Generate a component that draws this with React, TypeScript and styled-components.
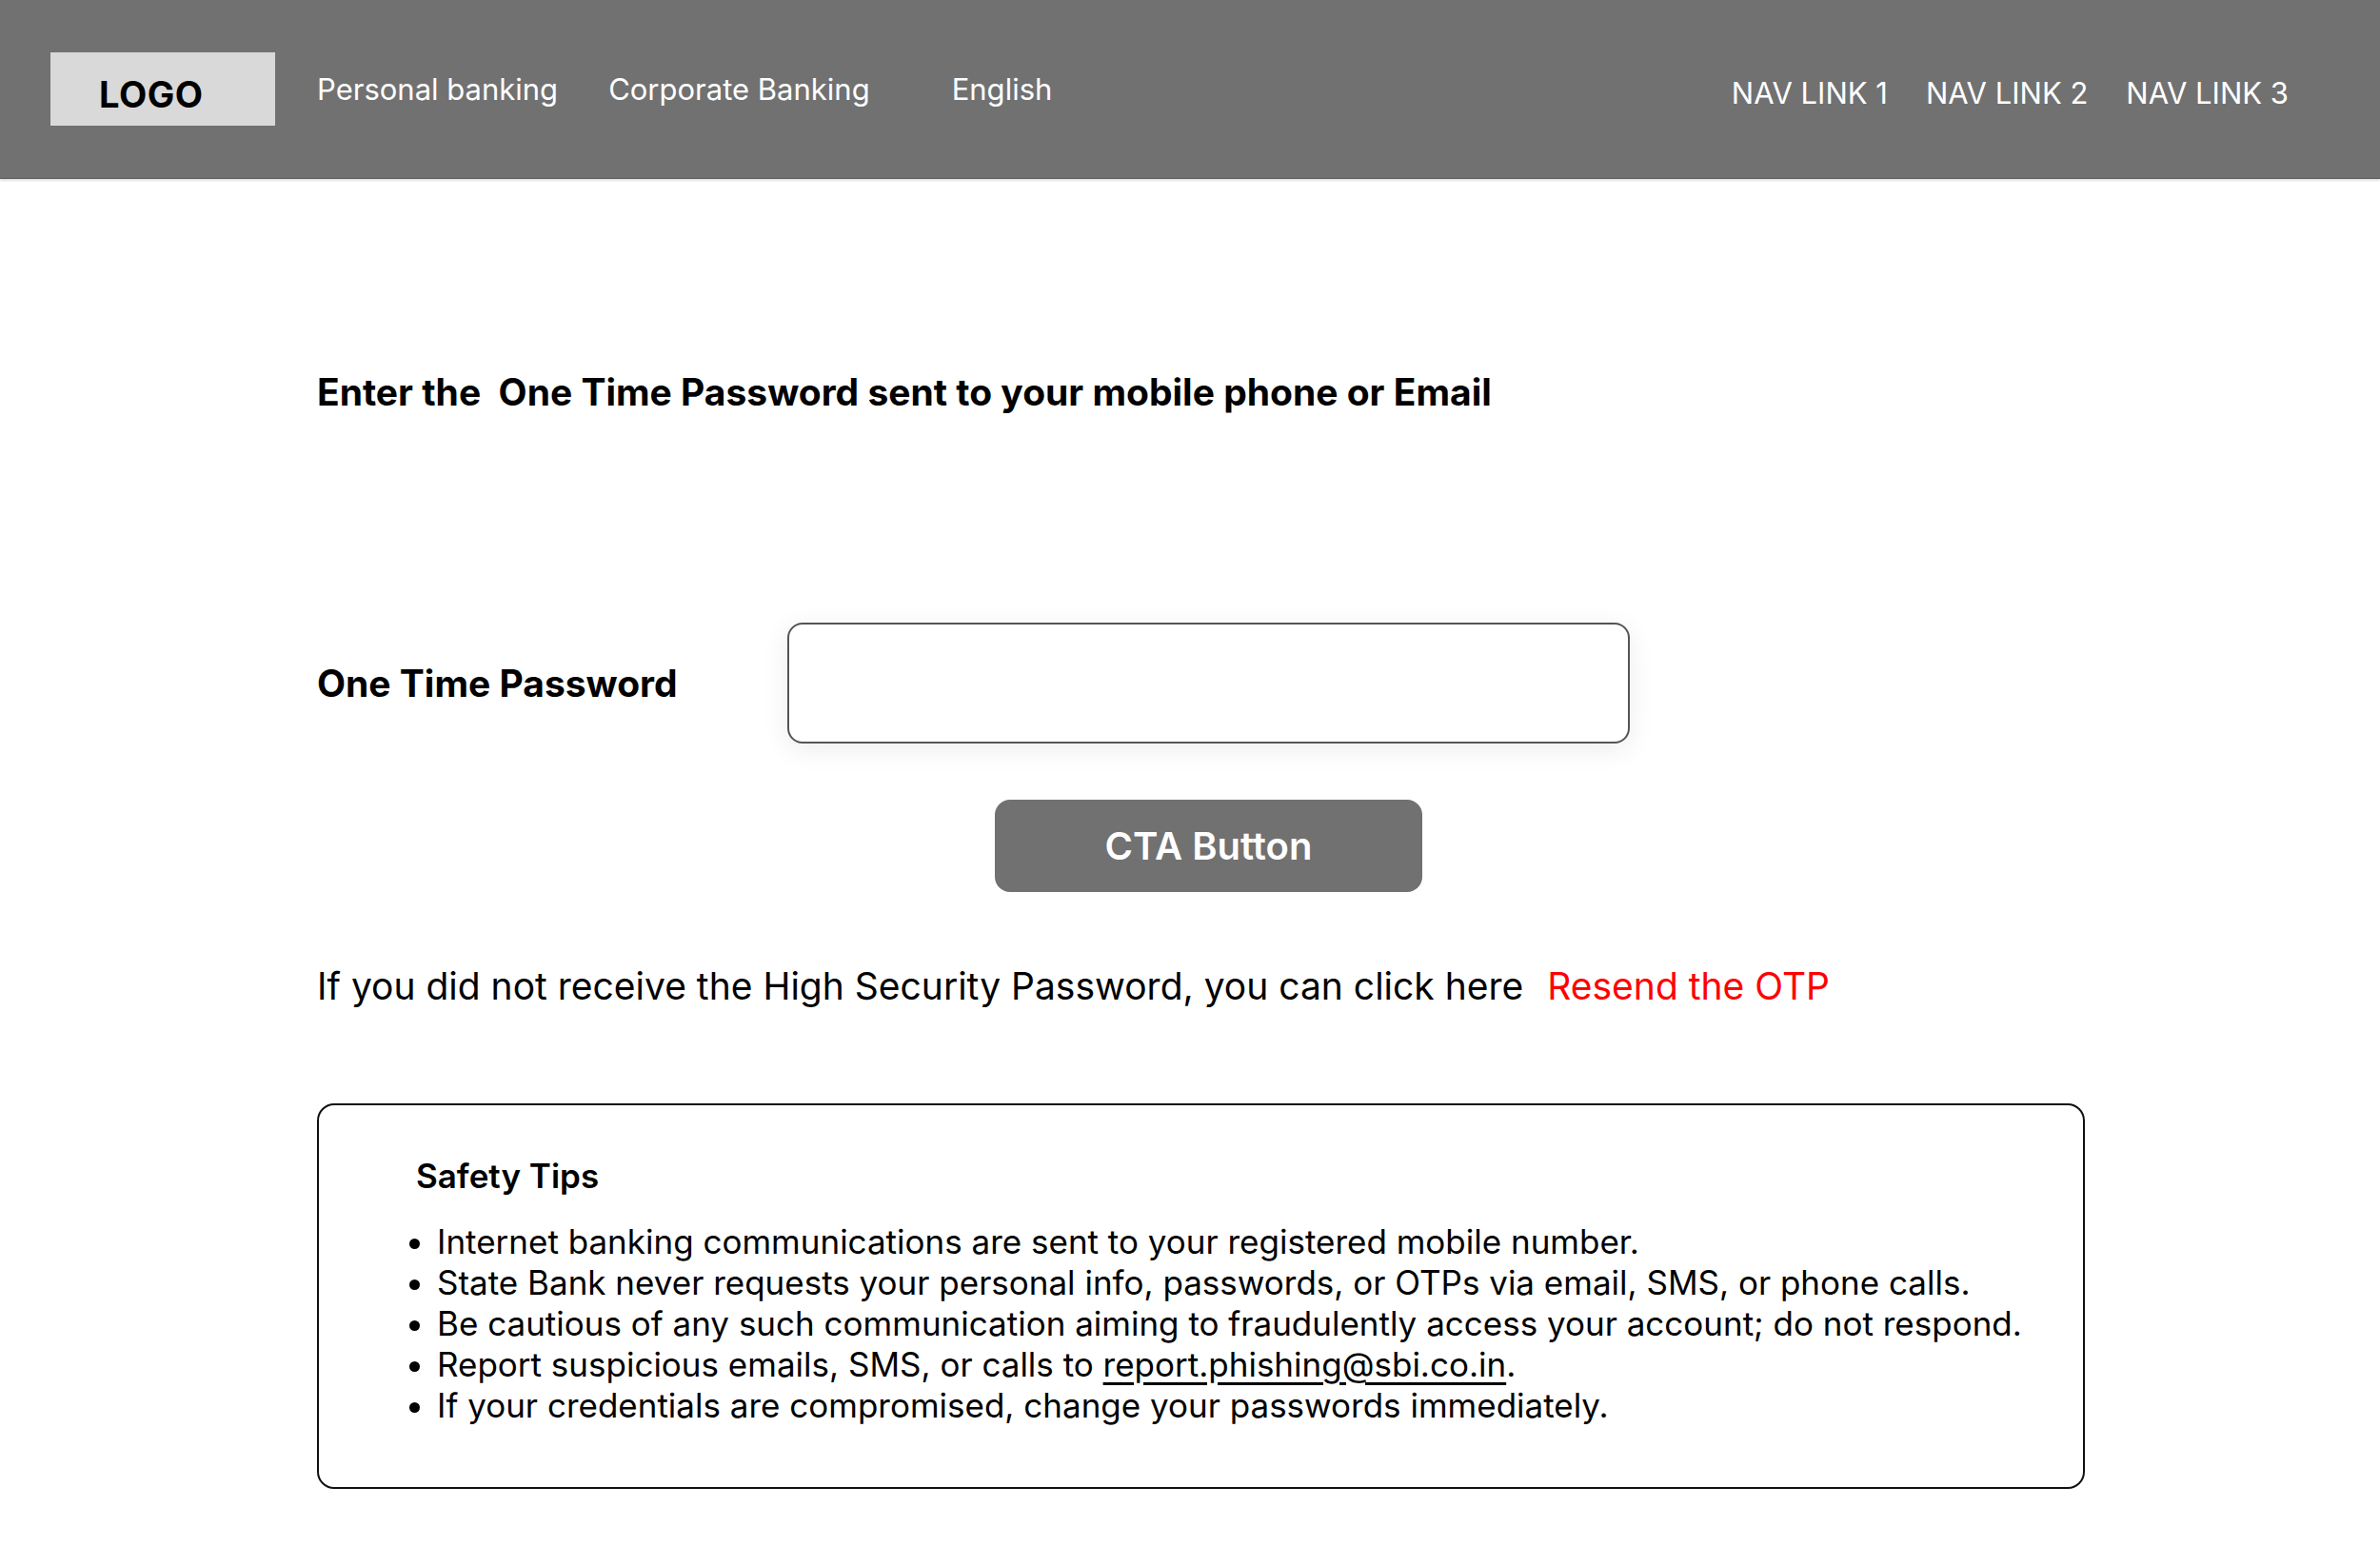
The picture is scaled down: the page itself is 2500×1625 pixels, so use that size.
import React, { FC } from "react";
import styled, { createGlobalStyle } from "styled-components";

const GlobalStyle = createGlobalStyle`
  body {
    margin: 0;
    background: #ffffff;
    font-family: Inter, "Noto Sans", "Liberation Sans", sans-serif;
    color: #000000;
  }
`;

const Header = styled.header`
  height: 187px;
  background: #717171;
  display: flex;
  align-items: center;
  padding: 0 96px 0 53px;
  box-sizing: border-box;
  box-shadow: 0 1px 0 #5f5f5f, 0 3px 2px rgba(0, 0, 0, 0.12);
`;

const Logo = styled.div`
  width: 236px;
  height: 77px;
  background: #d9d9d9;
  box-sizing: border-box;
  padding: 10px 0 0 51px;
  display: flex;
  align-items: center;
  font-size: 38px;
  font-weight: 700;
  letter-spacing: 0.5px;
`;

const TopLink = styled.a<{ gap: number }>`
  margin-left: ${p => p.gap}px;
  color: #ffffff;
  font-size: 31px;
  text-decoration: none;
`;

const RightNav = styled.nav`
  margin-left: auto;
  display: flex;
  gap: 40px;
  padding-top: 8px;
`;

const NavLink = styled.a`
  color: #ffffff;
  font-size: 31px;
  text-decoration: none;
`;

const Main = styled.main`
  padding: 202px 0 60px 333px;
`;

const Heading = styled.h1`
  margin: 0;
  font-size: 39px;
  line-height: 46px;
  font-weight: 700;
  white-space: pre;
`;

const FormGrid = styled.div`
  margin-top: 219px;
  display: grid;
  grid-template-columns: 494px 885px;
  row-gap: 59px;
  align-items: center;
`;

const Label = styled.label`
  font-size: 39px;
  line-height: 46px;
  font-weight: 700;
`;

const OtpInput = styled.input`
  height: 127px;
  box-sizing: border-box;
  border: 2px solid #555555;
  border-radius: 16px;
  background: #ffffff;
  box-shadow: 0 6px 28px rgba(0, 0, 0, 0.08);
  font-size: 36px;
  padding: 0 24px;
  outline: none;
`;

const CtaButton = styled.button`
  grid-column: 2;
  justify-self: center;
  width: 449px;
  height: 97px;
  border: none;
  border-radius: 16px;
  background: #717171;
  color: #ffffff;
  font-family: inherit;
  font-size: 40px;
  font-weight: 600;
  cursor: pointer;
`;

const ResendLine = styled.p`
  margin: 76px 0 0;
  font-size: 39px;
  line-height: 46px;
`;

const ResendLink = styled.a`
  margin-left: 25px;
  color: #ff0000;
  text-decoration: none;
`;

const TipsBox = styled.section`
  margin-top: 100px;
  width: 1857px;
  box-sizing: border-box;
  border: 2px solid #111111;
  border-radius: 18px;
  padding: 54px 40px 64px 102px;
`;

const TipsTitle = styled.h2`
  margin: 0;
  font-size: 35px;
  line-height: 40px;
  font-weight: 600;
`;

const TipsList = styled.ul`
  margin: 28px 0 0;
  padding-left: 22px;
  font-size: 35px;
  line-height: 43px;
`;

const Mail = styled.a`
  color: #000000;
  text-decoration: underline;
  text-underline-offset: 6px;
`;

const tips = [
  "Internet banking communications are sent to your registered mobile number.",
  "State Bank never requests your personal info, passwords, or OTPs via email, SMS, or phone calls.",
  "Be cautious of any such communication aiming to fraudulently access your account; do not respond."
];

const App: FC = () => (
  <>
    <GlobalStyle />
    <Header>
      <Logo>LOGO</Logo>
      <TopLink gap={44}>Personal banking</TopLink>
      <TopLink gap={53}>Corporate Banking</TopLink>
      <TopLink gap={86}>English</TopLink>
      <RightNav>
        <NavLink>NAV LINK 1</NavLink>
        <NavLink>NAV LINK 2</NavLink>
        <NavLink>NAV LINK 3</NavLink>
      </RightNav>
    </Header>
    <Main>
      <Heading>Enter the  One Time Password sent to your mobile phone or Email</Heading>
      <FormGrid>
        <Label htmlFor="otp">One Time Password</Label>
        <OtpInput id="otp" type="password" />
        <CtaButton>CTA Button</CtaButton>
      </FormGrid>
      <ResendLine>
        If you did not receive the High Security Password, you can click here
        <ResendLink>Resend the OTP</ResendLink>
      </ResendLine>
      <TipsBox>
        <TipsTitle>Safety Tips</TipsTitle>
        <TipsList>
          {tips.map(t => (
            <li key={t}>{t}</li>
          ))}
          <li>
            Report suspicious emails, SMS, or calls to{" "}
            <Mail>report.phishing@sbi.co.in</Mail>.
          </li>
          <li>If your credentials are compromised, change your passwords immediately.</li>
        </TipsList>
      </TipsBox>
    </Main>
  </>
);

export default App;
